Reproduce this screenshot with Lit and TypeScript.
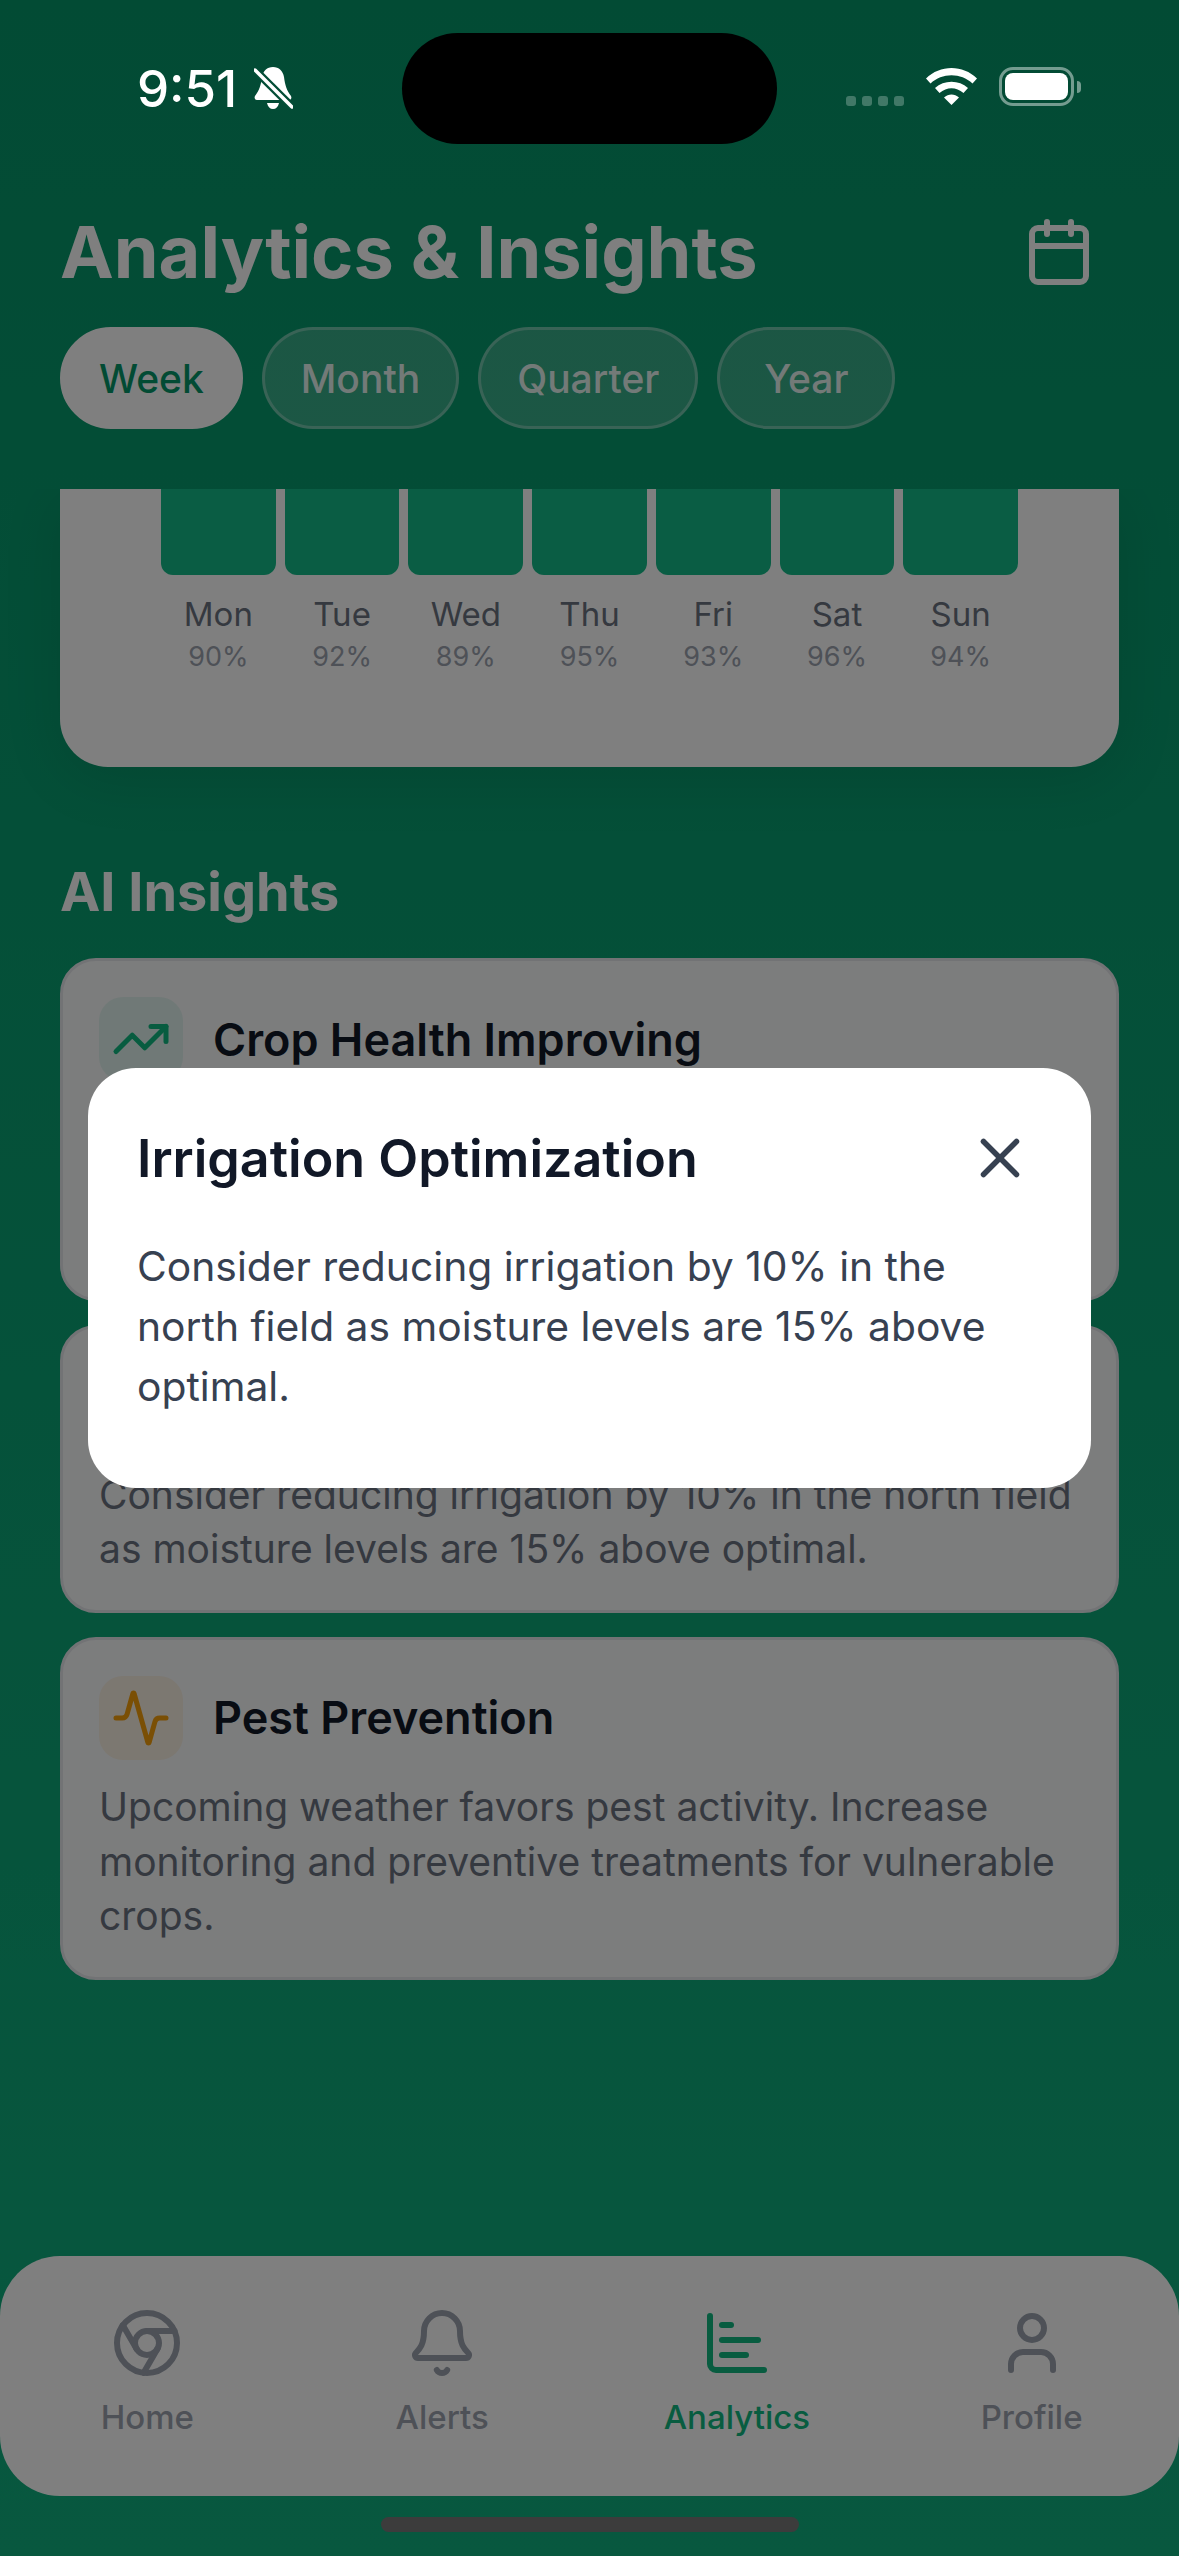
import { LitElement, html, css, svg } from 'lit';
import { customElement } from 'lit/decorators.js';

const days = [
  { day: 'Mon', pct: '90%' },
  { day: 'Tue', pct: '92%' },
  { day: 'Wed', pct: '89%' },
  { day: 'Thu', pct: '95%' },
  { day: 'Fri', pct: '93%' },
  { day: 'Sat', pct: '96%' },
  { day: 'Sun', pct: '94%' },
];

const icons = {
  trend: svg`<path d="M22 7l-8.5 8.5-5-5L2 17" /><path d="M16 7h6v6" />`,
  drop: svg`<path d="M12 22a7 7 0 0 0 7-7c0-2-1-3.9-3-5.5s-3.5-4-4-6.5c-.5 2.5-2 4.9-4 6.5C6 11.1 5 13 5 15a7 7 0 0 0 7 7z" />`,
  activity: svg`<path d="M22 12h-2.48a2 2 0 0 0-1.93 1.46l-2.35 8.36a.25.25 0 0 1-.48 0L9.24 2.18a.25.25 0 0 0-.48 0l-2.35 8.36A2 2 0 0 1 4.49 12H2" />`,
  chrome: svg`<circle cx="12" cy="12" r="10" /><circle cx="12" cy="12" r="4" /><path d="M21.17 8H12" /><path d="M3.95 6.06 8.54 14" /><path d="M10.88 21.94 15.46 14" />`,
  bell: svg`<path d="M10.268 21a2 2 0 0 0 3.464 0" /><path d="M3.262 15.326A1 1 0 0 0 4 17h16a1 1 0 0 0 .74-1.673C19.41 13.956 18 12.499 18 8A6 6 0 0 0 6 8c0 4.499-1.411 5.956-2.738 7.326" />`,
  chart: svg`<path d="M3 3v16a2 2 0 0 0 2 2h16" /><path d="M7 16h8" /><path d="M7 11h12" /><path d="M7 6h3" />`,
  user: svg`<path d="M19 21v-2a4 4 0 0 0-4-4H9a4 4 0 0 0-4 4v2" /><circle cx="12" cy="7" r="4" />`,
  calendar: svg`<path d="M8 2v4" /><path d="M16 2v4" /><rect x="3" y="4" width="18" height="18" rx="2" /><path d="M3 10h18" />`,
  close: svg`<path d="M18 6 6 18" /><path d="m6 6 12 12" />`,
};

const insights = [
  {
    icon: icons.trend,
    tone: 'green',
    title: 'Crop Health Improving',
    text: 'NDVI readings have risen by 12% over the past week. Current practices are showing positive results across all fields.',
  },
  {
    icon: icons.drop,
    tone: 'blue',
    title: 'Irrigation Optimization',
    text: 'Consider reducing irrigation by 10% in the north field as moisture levels are 15% above optimal.',
  },
  {
    icon: icons.activity,
    tone: 'amber',
    title: 'Pest Prevention',
    text: 'Upcoming weather favors pest activity. Increase monitoring and preventive treatments for vulnerable crops.',
  },
];

const navItems = [
  { label: 'Home', icon: icons.chrome },
  { label: 'Alerts', icon: icons.bell },
  { label: 'Analytics', icon: icons.chart, active: true },
  { label: 'Profile', icon: icons.user },
];

@customElement('app-root')
export class AppRoot extends LitElement {
  static styles = css`
    :host {
      display: block;
      font-family: 'Inter', 'Liberation Sans', sans-serif;
    }

    .phone {
      position: relative;
      width: 1179px;
      height: 2556px;
      overflow: hidden;
      display: flex;
      flex-direction: column;
      background: linear-gradient(180deg, #059669 0%, #10b07f 100%);
    }

    svg.line {
      display: block;
      fill: none;
      stroke: currentColor;
      stroke-width: 2;
      stroke-linecap: round;
      stroke-linejoin: round;
    }

    /* status bar sits above the dimmer */
    .status {
      position: relative;
      z-index: 3;
      display: flex;
      padding-top: 33px;
      height: 111px;
      flex: none;
      color: #fff;
    }

    .status-left {
      width: 402px;
      box-sizing: border-box;
      padding: 34px 0 0 137px;
      display: flex;
      align-items: flex-start;
      gap: 17px;
    }

    .time {
      font-size: 51px;
      font-weight: 500;
      line-height: 44px;
    }

    .island {
      width: 375px;
      height: 111px;
      border-radius: 56px;
      background: #000;
    }

    .status-right {
      display: flex;
      align-items: flex-start;
      padding: 35px 0 0 69px;
    }

    .dots {
      display: flex;
      gap: 6px;
      margin: 28px 22px 0 0;
    }

    .dots span {
      width: 10px;
      height: 10px;
      border-radius: 3px;
      background: rgba(255, 255, 255, 0.25);
    }

    .battery {
      display: flex;
      align-items: center;
      margin: -1px 0 0 22px;
    }

    .battery-body {
      box-sizing: border-box;
      width: 75px;
      height: 39px;
      padding: 3px;
      border: 3px solid rgba(255, 255, 255, 0.45);
      border-radius: 14px;
    }

    .battery-body span {
      display: block;
      height: 100%;
      border-radius: 8px;
      background: #fff;
    }

    .battery-cap {
      width: 4px;
      height: 12px;
      margin-left: 3px;
      border-radius: 0 6px 6px 0;
      background: rgba(255, 255, 255, 0.45);
    }

    .header {
      flex: none;
      display: flex;
      align-items: center;
      justify-content: space-between;
      margin-top: 48px;
      padding: 0 60px;
    }

    h1 {
      margin: 0;
      font-size: 72px;
      line-height: 96px;
      font-weight: 700;
      color: #fff;
    }

    .calendar {
      padding: 24px;
      color: #fff;
    }

    .tabs {
      flex: none;
      display: flex;
      gap: 19px;
      margin: 15px 0 60px;
      padding: 0 60px;
    }

    .tab {
      box-sizing: border-box;
      min-width: 178px;
      height: 102px;
      padding: 0 36px;
      display: flex;
      align-items: center;
      justify-content: center;
      font-size: 39px;
      font-weight: 500;
      color: rgba(255, 255, 255, 0.9);
      background: rgba(255, 255, 255, 0.2);
      border: 3px solid rgba(255, 255, 255, 0.3);
      border-radius: 60px;
    }

    .tab.active {
      color: #059669;
      background: #fff;
      border-color: #fff;
    }

    .scroller {
      flex: 1;
      min-height: 0;
      overflow: hidden;
      padding: 0 60px;
    }

    .chart {
      padding: 0 101px 92px;
      background: #fff;
      border-radius: 0 0 48px 48px;
      box-shadow: 0 12px 60px rgba(0, 0, 0, 0.1);
    }

    .days {
      display: grid;
      grid-template-columns: repeat(7, 1fr);
      gap: 9px;
    }

    .day {
      display: flex;
      flex-direction: column;
      align-items: center;
    }

    .bar {
      align-self: stretch;
      height: 86px;
      background: #14ba88;
      border-radius: 0 0 12px 12px;
    }

    .day-name {
      margin-top: 15px;
      font-size: 33px;
      line-height: 48px;
      color: #6b7280;
    }

    .day-pct {
      margin-top: 1px;
      font-size: 27px;
      line-height: 36px;
      color: #9ca3af;
    }

    h2 {
      margin: 89px 0 30px;
      font-size: 54px;
      line-height: 72px;
      font-weight: 700;
      color: #fff;
    }

    .insights {
      display: flex;
      flex-direction: column;
      gap: 24px;
    }

    .insight {
      padding: 36px 36px 33px;
      background: #f9fafb;
      border: 3px solid #e5e7eb;
      border-radius: 36px;
    }

    .insight-head {
      display: flex;
      align-items: center;
      gap: 30px;
      margin-bottom: 20px;
    }

    .insight-icon {
      flex: none;
      width: 84px;
      height: 84px;
      border-radius: 24px;
      display: flex;
      align-items: center;
      justify-content: center;
    }

    .insight-icon.green {
      color: #10b981;
      background: rgba(16, 185, 129, 0.1);
    }

    .insight-icon.blue {
      color: #3b82f6;
      background: rgba(59, 130, 246, 0.1);
    }

    .insight-icon.amber {
      color: #f59e0b;
      background: rgba(245, 158, 11, 0.1);
    }

    h3 {
      margin: 0;
      font-size: 45px;
      font-weight: 600;
      color: #111827;
    }

    .insight p {
      margin: 0;
      font-size: 39px;
      line-height: 54.6px;
      color: #6b7280;
    }

    .nav {
      flex: none;
      box-sizing: border-box;
      height: 240px;
      padding-top: 51px;
      display: grid;
      grid-template-columns: repeat(4, 1fr);
      background: #fff;
      border-radius: 60px;
    }

    .nav-item {
      display: flex;
      flex-direction: column;
      align-items: center;
      gap: 14px;
      font-size: 33px;
      line-height: 48px;
      font-weight: 500;
      color: #9ca3af;
    }

    .nav-item.active {
      color: #10b981;
    }

    .home-bar {
      flex: none;
      width: 418px;
      height: 15px;
      margin: 21px auto 24px;
      border-radius: 9px;
      background: #787878;
    }

    .dim {
      position: absolute;
      inset: 0;
      z-index: 2;
      display: flex;
      align-items: center;
      justify-content: center;
      background: rgba(0, 0, 0, 0.5);
    }

    .modal {
      box-sizing: border-box;
      width: 1003px;
      height: 420px;
      padding: 48px 58px 0 49px;
      background: #fff;
      border-radius: 48px;
    }

    .modal-head {
      display: flex;
      align-items: center;
      justify-content: space-between;
      height: 84px;
      margin-bottom: 36px;
    }

    .modal-head h3 {
      font-size: 52px;
    }

    .close {
      color: #374151;
    }

    .modal p {
      margin: 0;
      font-size: 40.8px;
      line-height: 60px;
      color: #374151;
    }
  `;

  private lineIcon(body: unknown, size = 72) {
    return html`<svg class="line" width=${size} height=${size} viewBox="0 0 24 24">${body}</svg>`;
  }

  private renderStatus() {
    return html`
      <div class="status">
        <div class="status-left">
          <span class="time">9:51</span>
          <svg width="39" height="42" viewBox="0 0 39 42">
            <path fill="#fff" d="M19 0C25 0 29 4 30 10C31 18 33 24 37 29C38 31 37 33 35 33H3C1 33 0 31 1 29C5 24 7 18 8 10C9 4 13 0 19 0Z" />
            <path fill="#fff" d="M13 36H25C24 40 22 42 19 42C16 42 14 40 13 36Z" />
            <path d="M1 3 38 40" stroke="#034d36" stroke-width="8" />
            <path d="M1 3 38 40" stroke="#fff" stroke-width="3.5" stroke-linecap="round" />
          </svg>
        </div>
        <div class="island"></div>
        <div class="status-right">
          <div class="dots"><span></span><span></span><span></span><span></span></div>
          <svg width="51" height="37" viewBox="0 0 51 37" fill="#fff">
            <path d="M0 10.5C14-3.5 37-3.5 51 10.5L46.5 15.5C35 4.5 16 4.5 4.5 15.5Z" />
            <path d="M9 20C18 11.5 33 11.5 42 20L37.5 25C30 18.5 21 18.5 13.5 25Z" />
            <path d="M18 29.5C22.5 25.5 28.5 25.5 33 29.5L25.5 37Z" />
          </svg>
          <div class="battery">
            <div class="battery-body"><span></span></div>
            <div class="battery-cap"></div>
          </div>
        </div>
      </div>
    `;
  }

  render() {
    return html`
      <div class="phone">
        ${this.renderStatus()}

        <div class="header">
          <h1>Analytics &amp; Insights</h1>
          <div class="calendar">${this.lineIcon(icons.calendar)}</div>
        </div>

        <div class="tabs">
          <div class="tab active">Week</div>
          <div class="tab">Month</div>
          <div class="tab">Quarter</div>
          <div class="tab">Year</div>
        </div>

        <div class="scroller">
          <div class="chart">
            <div class="days">
              ${days.map(
                (d) => html`
                  <div class="day">
                    <div class="bar"></div>
                    <div class="day-name">${d.day}</div>
                    <div class="day-pct">${d.pct}</div>
                  </div>
                `
              )}
            </div>
          </div>

          <h2>AI Insights</h2>
          <div class="insights">
            ${insights.map(
              (item) => html`
                <div class="insight">
                  <div class="insight-head">
                    <div class="insight-icon ${item.tone}">${this.lineIcon(item.icon, 60)}</div>
                    <h3>${item.title}</h3>
                  </div>
                  <p>${item.text}</p>
                </div>
              `
            )}
          </div>
        </div>

        <div class="nav">
          ${navItems.map(
            (n) => html`
              <div class="nav-item ${n.active ? 'active' : ''}">
                ${this.lineIcon(n.icon)}
                <span>${n.label}</span>
              </div>
            `
          )}
        </div>
        <div class="home-bar"></div>

        <div class="dim">
          <div class="modal">
            <div class="modal-head">
              <h3>Irrigation Optimization</h3>
              <div class="close">${this.lineIcon(icons.close, 66)}</div>
            </div>
            <p>Consider reducing irrigation by 10% in the north field as moisture levels are 15% above optimal.</p>
          </div>
        </div>
      </div>
    `;
  }
}
